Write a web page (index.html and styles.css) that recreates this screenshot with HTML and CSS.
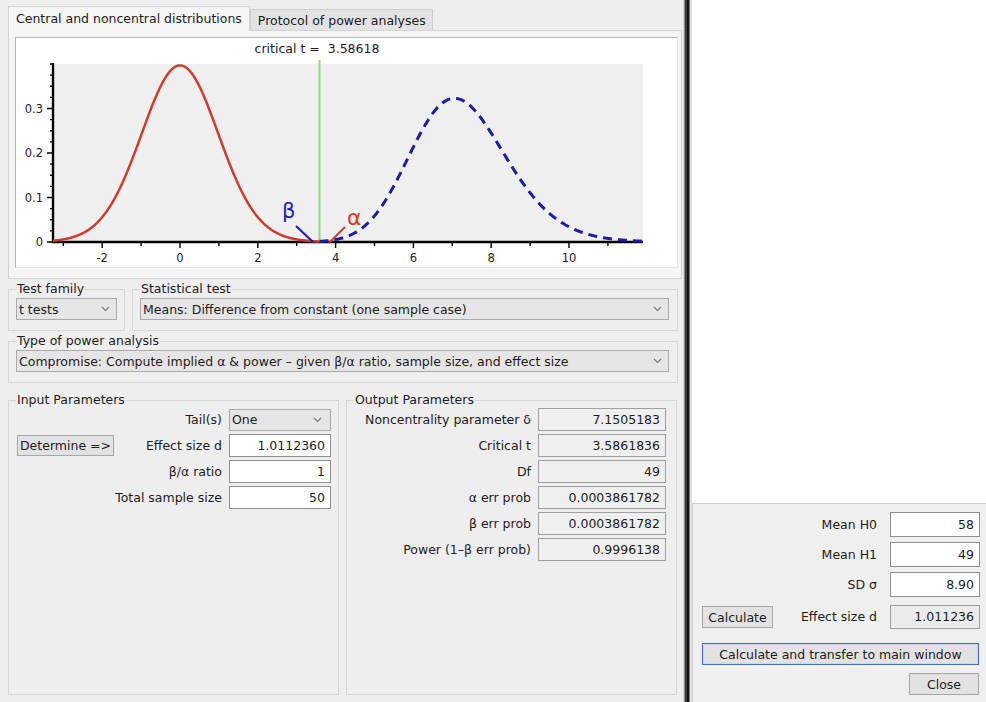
FILE: index.html
```html
<!DOCTYPE html>
<html lang="en">
<head>
<meta charset="utf-8">
<title>G*Power</title>
<link rel="stylesheet" href="styles.css">
</head>
<body>
<div class="screen">
  <div class="main">
    <div class="tabs">
      <div class="tab tab-active">Central and noncentral distributions</div>
      <div class="tab">Protocol of power analyses</div>
    </div>
    <div class="tabpanel">
      <div class="plot">
        <svg class="chart" width="661" height="229" viewBox="16 38 661 229" xmlns="http://www.w3.org/2000/svg">
          <rect x="53" y="64" width="590" height="178" fill="#efefef"/>
          <text class="crit" x="317" y="53" text-anchor="middle">critical t =  3.58618</text>
          <path class="ticks" d="M47 242h6M50 230.9h3M50 219.8h3M50 208.6h3M47 197.5h6M50 186.4h3M50 175.3h3M50 164.1h3M47 153h6M50 141.9h3M50 130.8h3M50 119.6h3M47 108.5h6M50 97.4h3M50 86.3h3M50 75.1h3M50 64h3"/>
          <path class="ticks" d="M63.3 242v4M102.2 242v6M141.1 242v4M180 242v6M218.9 242v4M257.8 242v6M296.7 242v4M335.6 242v6M374.5 242v4M413.4 242v6M452.3 242v4M491.2 242v6M530.1 242v4M569 242v6M607.9 242v4"/>
          <g class="tick-labels">
            <text x="43" y="246" text-anchor="end">0</text>
            <text x="43" y="201.5" text-anchor="end">0.1</text>
            <text x="43" y="157" text-anchor="end">0.2</text>
            <text x="43" y="112.5" text-anchor="end">0.3</text>
            <text x="102.2" y="262" text-anchor="middle">-2</text>
            <text x="180" y="262" text-anchor="middle">0</text>
            <text x="257.8" y="262" text-anchor="middle">2</text>
            <text x="335.6" y="262" text-anchor="middle">4</text>
            <text x="413.4" y="262" text-anchor="middle">6</text>
            <text x="491.2" y="262" text-anchor="middle">8</text>
            <text x="569" y="262" text-anchor="middle">10</text>
          </g>
          <path class="axis" d="M53 63V243M52 242H643"/>
          <path class="critline" d="M319.5 60V242"/>
          <path id="curve-central" class="curve-central" d=""/>
          <path id="curve-noncentral" class="curve-noncentral" d=""/>
          <path class="pointer-beta" d="M296 226L313 242"/>
          <path class="pointer-alpha" d="M345 227L329 243"/>
          <text class="greek greek-beta" x="282" y="218">β</text>
          <text class="greek greek-alpha" x="347" y="225">α</text>
        </svg>
      </div>
    </div>

    <div class="row row1">
      <fieldset class="group g-family">
        <legend>Test family</legend>
        <div class="combo"><span>t tests</span><svg class="chev" width="9" height="6" viewBox="0 0 9 6"><polyline points="1,1 4.5,4.5 8,1"/></svg></div>
      </fieldset>
      <fieldset class="group g-stat">
        <legend>Statistical test</legend>
        <div class="combo"><span>Means: Difference from constant (one sample case)</span><svg class="chev" width="9" height="6" viewBox="0 0 9 6"><polyline points="1,1 4.5,4.5 8,1"/></svg></div>
      </fieldset>
    </div>

    <fieldset class="group g-type">
      <legend>Type of power analysis</legend>
      <div class="combo"><span>Compromise: Compute implied α &amp; power – given β/α ratio, sample size, and effect size</span><svg class="chev" width="9" height="6" viewBox="0 0 9 6"><polyline points="1,1 4.5,4.5 8,1"/></svg></div>
    </fieldset>

    <div class="row row3">
      <fieldset class="group g-input">
        <legend>Input Parameters</legend>
        <div class="in-grid">
          <span></span>
          <span class="lbl">Tail(s)</span>
          <div class="combo combo-tail"><span>One</span><svg class="chev" width="9" height="6" viewBox="0 0 9 6"><polyline points="1,1 4.5,4.5 8,1"/></svg></div>

          <div class="btn btn-determine">Determine =&gt;</div>
          <span class="lbl">Effect size d</span>
          <div class="field">1.0112360</div>

          <span></span>
          <span class="lbl">β/α ratio</span>
          <div class="field">1</div>

          <span></span>
          <span class="lbl">Total sample size</span>
          <div class="field">50</div>
        </div>
      </fieldset>
      <fieldset class="group g-output">
        <legend>Output Parameters</legend>
        <div class="out-grid">
          <span class="lbl">Noncentrality parameter δ</span>
          <div class="field field-ro">7.1505183</div>
          <span class="lbl">Critical t</span>
          <div class="field field-ro">3.5861836</div>
          <span class="lbl">Df</span>
          <div class="field field-ro">49</div>
          <span class="lbl">α err prob</span>
          <div class="field field-ro">0.0003861782</div>
          <span class="lbl">β err prob</span>
          <div class="field field-ro">0.0003861782</div>
          <span class="lbl">Power (1–β err prob)</span>
          <div class="field field-ro">0.9996138</div>
        </div>
      </fieldset>
    </div>
  </div>

  <div class="divider"></div>

  <div class="side">
    <div class="side-blank"></div>
    <div class="dialog">
      <div class="dlg-grid">
        <span></span>
        <span class="lbl">Mean H0</span>
        <div class="field field-dlg">58</div>

        <span></span>
        <span class="lbl">Mean H1</span>
        <div class="field field-dlg">49</div>

        <span></span>
        <span class="lbl">SD σ</span>
        <div class="field field-dlg">8.90</div>

        <div class="btn btn-calc">Calculate</div>
        <span class="lbl lbl-last">Effect size d</span>
        <div class="field field-ro field-dlg-ro">1.011236</div>
      </div>
      <div class="btn btn-transfer">Calculate and transfer to main window</div>
      <div class="close-row">
        <div class="btn btn-close">Close</div>
      </div>
    </div>
  </div>
</div>
<script src="script.js"></script>
</body>
</html>
```

FILE: styles.css
```css
* {
  box-sizing: border-box;
}

html,
body {
  margin: 0;
  padding: 0;
}

body {
  width: 986px;
  height: 702px;
  overflow: hidden;
  background: #ffffff;
  color: #1c1c1c;
  font-family: "DejaVu Sans", "Liberation Sans", sans-serif;
  font-size: 12.5px;
}

.screen {
  display: flex;
  width: 986px;
  height: 702px;
}

/* ---------- main window ---------- */
.main {
  width: 683px;
  height: 702px;
  background: #eeeeee;
  padding-top: 6px;
  display: flex;
  flex-direction: column;
}

.tabs {
  display: flex;
  align-items: flex-end;
  height: 24px;
  padding-left: 8px;
}

.tab {
  height: 21px;
  padding: 0 6px 0 7px;
  border: 1px solid #cdcdcd;
  border-bottom: none;
  background: #e3e3e3;
  display: flex;
  align-items: center;
  white-space: nowrap;
}

.tab-active {
  height: 25px;
  margin-bottom: -1px;
  padding: 0 7px 1px 7px;
  background: #f6f6f6;
  border-color: #d4d4d4;
  position: relative;
  z-index: 1;
}

.tabpanel {
  margin-left: 8px;
  width: 674px;
  height: 249px;
  background: #f5f5f5;
  border: 1px solid #d3d3d3;
  padding: 6px 0 0 6px;
}

.plot {
  width: 663px;
  height: 231px;
  background: #ffffff;
  border: 1px solid #e4e4e4;
  border-top-color: #b6b6b6;
  border-left-color: #b6b6b6;
}

.chart {
  display: block;
  font-family: "DejaVu Sans", "Liberation Sans", sans-serif;
}

.crit {
  font-size: 12.5px;
  fill: #1c1c1c;
  white-space: pre;
}

.tick-labels {
  font-size: 11.5px;
  fill: #222222;
}

.ticks {
  stroke: #000000;
  stroke-width: 1.4;
  fill: none;
}

.axis {
  stroke: #000000;
  stroke-width: 2.4;
  fill: none;
}

.critline {
  stroke: #8fdc7c;
  stroke-width: 2;
  fill: none;
}

.curve-central {
  stroke: #cc3d2f;
  stroke-width: 2.5;
  fill: none;
  stroke-linejoin: round;
}

.curve-noncentral {
  stroke: #1c1ca4;
  stroke-width: 3;
  fill: none;
  stroke-dasharray: 9 6;
}

.pointer-beta {
  stroke: #1c1cb0;
  stroke-width: 2;
}

.pointer-alpha {
  stroke: #d23a2c;
  stroke-width: 2;
}

.greek {
  font-size: 21px;
}

.greek-beta {
  fill: #1c1cb4;
}

.greek-alpha {
  fill: #d23a2c;
  font-size: 22px;
}

/* ---------- group boxes ---------- */
.row {
  display: flex;
  gap: 7px;
  margin-left: 8px;
}

.row1 {
  margin-top: 3px;
}

.row3 {
  margin-top: 10px;
}

.group {
  margin: 0;
  min-width: 0;
  border: 1px solid #d6d6d6;
  padding: 2px 7px 10px 7px;
}

.group legend {
  padding: 0 1px;
  height: 14px;
  line-height: 14px;
}

.g-family {
  width: 117px;
}

.g-stat {
  width: 546px;
  padding-right: 8px;
}

.g-type {
  width: 670px;
  margin: 3px 0 0 8px;
  padding-right: 8px;
}

.g-input {
  width: 331px;
  padding: 1px 7px 0 7px;
}

.g-output {
  width: 331px;
  padding: 1px 10px 0 7px;
}

/* ---------- controls ---------- */
.combo {
  height: 22px;
  border: 1px solid #a9a9a9;
  background: #e5e5e5;
  display: flex;
  align-items: center;
  justify-content: space-between;
  padding: 0 6px 0 2px;
  white-space: nowrap;
}

.combo-tail {
  padding-right: 8px;
}

.chev polyline {
  fill: none;
  stroke: #7c7c7c;
  stroke-width: 1.2;
}

.lbl {
  display: flex;
  justify-content: flex-end;
  min-width: 0;
  white-space: nowrap;
}

.field {
  height: 23px;
  border: 1px solid #8e8e8e;
  background: #ffffff;
  text-align: right;
  padding: 0 5px;
  line-height: 21px;
  white-space: nowrap;
}

.field-ro {
  background: #efefef;
  border-color: #9e9e9e;
}

.btn {
  height: 22px;
  border: 1px solid #a6a6a6;
  background: #e2e2e2;
  display: flex;
  align-items: center;
  justify-content: center;
  white-space: nowrap;
}

.in-grid {
  height: 286px;
  display: grid;
  grid-template-columns: 98px minmax(0, 1fr) 102px;
  grid-auto-rows: 23px;
  column-gap: 7px;
  row-gap: 3px;
  align-content: start;
  align-items: center;
}

.btn-determine {
  margin-left: 1px;
  height: 21px;
}

.out-grid {
  height: 286px;
  display: grid;
  grid-template-columns: minmax(0, 1fr) 128px;
  grid-auto-rows: 23px;
  column-gap: 7px;
  row-gap: 3px;
  align-content: start;
  align-items: center;
}

/* ---------- divider & side ---------- */
.divider {
  width: 9px;
  background: linear-gradient(to right,
    #d8d8d8 0 1px,
    #8c8c8c 1px 2px,
    #3c3c3c 2px 4px,
    #121212 4px 6px,
    #7a7a7a 6px 7px,
    #dedede 7px 9px);
}

.side {
  flex: 1;
  display: flex;
  flex-direction: column;
  background: #ffffff;
}

.side-blank {
  flex: 1;
}

.dialog {
  height: 199px;
  background: #efefef;
  border-top: 1px solid #cfcfcf;
  border-left: 1px solid #d0d0d0;
  padding: 8px 6px 0 9px;
  display: flex;
  flex-direction: column;
}

.dlg-grid {
  display: grid;
  grid-template-columns: 71px minmax(0, 1fr) 90px;
  grid-template-rows: 25px 25px 25px 27px;
  column-gap: 13px;
  row-gap: 5px;
  align-items: center;
}

.field-dlg {
  height: 25px;
  line-height: 23px;
}

.field-dlg-ro {
  height: 24px;
  line-height: 22px;
  align-self: end;
  background: #ebebeb;
}

.lbl-last {
  align-self: end;
  line-height: 24px;
}

.btn-calc {
  align-self: end;
  margin-bottom: 1px;
  height: 22px;
}

.btn-transfer {
  margin-top: 14px;
  margin-right: 1px;
  height: 22px;
  border-color: #3f70c4;
  box-shadow: inset 0 0 0 1px #cad8ef;
}

.close-row {
  display: flex;
  justify-content: flex-end;
  margin-top: 8px;
  padding-right: 1px;
}

.btn-close {
  width: 70px;
  height: 22px;
}
```

FILE: script.js
```js
(function () {
  var X0 = 180, SX = 38.9, Y0 = 242, SY = 445;
  var DF = 49, NCP = 7.1505183, CRIT = 3.58618;
  var TMIN = (53 - X0) / SX, TMAX = (643 - X0) / SX;

  function lgamma(x) {
    return (x - 0.5) * Math.log(x) - x + 0.5 * Math.log(2 * Math.PI) +
      1 / (12 * x) - 1 / (360 * x * x * x);
  }

  var C = Math.exp(lgamma((DF + 1) / 2) - lgamma(DF / 2)) / Math.sqrt(DF * Math.PI);
  function tpdf(t) {
    return C * Math.pow(1 + t * t / DF, -(DF + 1) / 2);
  }

  var vs = [], ws = [], sum = 0, k = DF / 2 - 1, ref = k * Math.log(DF) - DF / 2;
  for (var v = 2; v < 160; v += 0.2) {
    var w = Math.exp(k * Math.log(v) - v / 2 - ref);
    vs.push(v); ws.push(w); sum += w;
  }
  function nctpdf(t) {
    var s = 0;
    for (var i = 0; i < vs.length; i++) {
      var r = Math.sqrt(vs[i] / DF);
      var z = t * r - NCP;
      s += ws[i] * r * Math.exp(-z * z / 2);
    }
    return s / sum / Math.sqrt(2 * Math.PI);
  }

  function path(f, a, b) {
    var d = '';
    var n = Math.ceil((b - a) / 0.02);
    for (var i = 0; i <= n; i++) {
      var t = a + (b - a) * i / n;
      var x = X0 + SX * t, y = Y0 - SY * f(t);
      d += (d ? ' L' : 'M') + x.toFixed(2) + ' ' + y.toFixed(2);
    }
    return d;
  }

  document.getElementById('curve-central').setAttribute('d', path(tpdf, TMIN, CRIT));
  document.getElementById('curve-noncentral').setAttribute('d', path(nctpdf, CRIT, TMAX));
})();
```
